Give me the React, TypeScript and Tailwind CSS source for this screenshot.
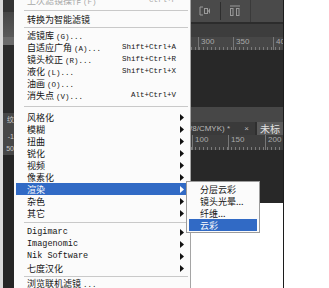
import React from "react";

type Row =
  | { sep: true; h: string }
  | {
      sep?: false;
      label: string;
      suffix?: string;
      shortcut?: string;
      arrow?: boolean;
      latin?: boolean;
      disabled?: boolean;
      active?: boolean;
    };

const rows: Row[] = [
  { label: "上次滤镜操作", suffix: "(F)", shortcut: "Ctrl+F", disabled: true },
  { sep: true, h: "h-[6px]" },
  { label: "转换为智能滤镜" },
  { sep: true, h: "h-[5px]" },
  { label: "滤镜库", suffix: "(G)..." },
  { label: "自适应广角", suffix: "(A)...", shortcut: "Shift+Ctrl+A" },
  { label: "镜头校正", suffix: "(R)...", shortcut: "Shift+Ctrl+R" },
  { label: "液化", suffix: "(L)...", shortcut: "Shift+Ctrl+X" },
  { label: "油画", suffix: "(O)..." },
  { label: "消失点", suffix: "(V)...", shortcut: "Alt+Ctrl+V" },
  { sep: true, h: "h-[9px]" },
  { label: "风格化", arrow: true },
  { label: "模糊", arrow: true },
  { label: "扭曲", arrow: true },
  { label: "锐化", arrow: true },
  { label: "视频", arrow: true },
  { label: "像素化", arrow: true },
  { label: "渲染", arrow: true, active: true },
  { label: "杂色", arrow: true },
  { label: "其它", arrow: true },
  { sep: true, h: "h-[7px]" },
  { label: "Digimarc", arrow: true, latin: true },
  { label: "Imagenomic", arrow: true, latin: true },
  { label: "Nik Software", arrow: true, latin: true },
  { label: "七度汉化", arrow: true },
  { sep: true, h: "h-[4px]" },
  { label: "浏览联机滤镜", suffix: "..." },
];

const sub = ["分层云彩", "镜头光晕...", "纤维...", "云彩"];

function Arrow({ white }: { white?: boolean }) {
  return (
    <svg width="4" height="7" viewBox="0 0 4 7" className="shrink-0">
      <path d="M0 0 L4 3.5 L0 7 Z" fill={white ? "#ffffff" : "#111111"} />
    </svg>
  );
}

function MenuRow({ row }: { row: Exclude<Row, { sep: true }> }) {
  const color = row.disabled ? "text-[#a8a8a8]" : row.active ? "text-white" : "text-[#151515]";
  return (
    <div
      className={`mx-[2px] flex h-3 shrink-0 items-center leading-none ${color} ${
        row.active ? "bg-[#316ac5]" : ""
      } ${row.shortcut ? "pr-[12px]" : "pr-[4px]"} pl-[11px]`}
    >
      <div className="flex flex-1 items-baseline">
        {row.latin ? (
          <span className="font-['Liberation_Mono',monospace] text-[8.5px]">{row.label}</span>
        ) : (
          <span className="font-['Noto_Sans_CJK_SC',sans-serif] text-[9px]">{row.label}</span>
        )}
        {row.suffix && (
          <span className="ml-[2px] font-['Liberation_Mono',monospace] text-[7.5px]">{row.suffix}</span>
        )}
      </div>
      {row.shortcut && (
        <span className="font-['Liberation_Mono',monospace] text-[7.5px]">{row.shortcut}</span>
      )}
      {row.arrow && <Arrow white={row.active} />}
    </div>
  );
}

function Ruler({ labels }: { labels: { t: string; x: string }[] }) {
  return (
    <div className="relative h-full w-full overflow-hidden">
      <div className="flex h-full items-start">
        {labels.map((l) => (
          <div key={l.t} className={`flex h-full shrink-0 items-start border-l border-[#777] pl-[2px] ${l.x}`}>
            <span className="font-['Liberation_Sans',sans-serif] text-[8px] leading-[10px] text-[#a9a9a9]">{l.t}</span>
          </div>
        ))}
      </div>
      <div className="absolute bottom-0 left-0 right-0 h-[3px] bg-[repeating-linear-gradient(90deg,#7a7a7a_0_1px,transparent_1px_4px)]" />
    </div>
  );
}

export default function App() {
  return (
    <div className="relative flex h-[288px] w-[329px] overflow-hidden bg-white">
      {/* left strip of the app behind */}
      <div className="flex w-[14px] shrink-0">
        <div className="w-[3px] bg-[#d9d9d9]" />
        <div className="flex w-[11px] flex-col">
          <div className="h-[12px] bg-[#343434]" />
          <div className="h-[25px] bg-gradient-to-b from-[#454545] to-[#5a5a5a]" />
          <div className="h-[8px] bg-[#6b6b6b]" />
          <div className="h-[68px] bg-[#2b2b2b]" />
          <div className="flex h-[42px] flex-col items-end gap-[4px] bg-[#474747] pt-[2px] font-['Liberation_Sans',sans-serif] text-[7px] leading-[8px] text-[#c8c8c8]">
            <span className="font-['Noto_Sans_CJK_SC',sans-serif]">纹</span>
            <span className="pt-[6px]">-1</span>
            <span>50</span>
          </div>
          <div className="flex-1 bg-[#252525]" />
        </div>
      </div>

      {/* filter menu */}
      <div className="flex w-[177px] shrink-0 flex-col border-r border-[#a5a5a5] bg-[#fbfbfb]">
        <div className="mt-[-5px] flex flex-col">
          {rows.map((r, i) =>
            r.sep ? (
              <div key={i} className={`flex shrink-0 items-center pl-[10px] pr-[2px] ${r.h}`}>
                <div className="h-px w-full bg-[#c9c9c9]" />
              </div>
            ) : (
              <MenuRow key={i} row={r} />
            )
          )}
        </div>
      </div>

      {/* photoshop workspace */}
      <div className="flex w-[93px] shrink-0 flex-col border-r border-[#1c1c1c]">
        <div className="flex h-[203px] flex-col bg-[#282828]">
          <div className="flex h-[22px] items-center bg-[#4a4a4a]">
            <svg width="12" height="12" viewBox="0 0 12 12" className="ml-[8px]">
              <path d="M1 2 H4 M1 2 V10 H4" stroke="#9a9a9a" fill="none" />
              <rect x="5.5" y="3.5" width="3" height="5" stroke="#9a9a9a" fill="none" />
              <path d="M11 3 L9 6 L11 9 Z" fill="#9a9a9a" />
            </svg>
            <div className="ml-[9px] h-[18px] w-px bg-[#2e2e2e]" />
            <svg width="12" height="12" viewBox="0 0 12 12" className="ml-[8px]">
              <path d="M1 1 H11" stroke="#9a9a9a" />
              <rect x="1.5" y="3.5" width="2.5" height="7" stroke="#9a9a9a" fill="none" />
              <rect x="7.5" y="3.5" width="2.5" height="7" stroke="#9a9a9a" fill="none" />
            </svg>
            <div className="ml-[9px] h-[22px] w-px bg-[#3a3a3a]" />
          </div>
          <div className="h-[2px] bg-[#2c2c2c]" />
          <div className="h-[13px] bg-[#3d3d3d]" />
          <div className="h-[13px] bg-[#474747]">
            <Ruler
              labels={[
                { t: "300", x: "ml-[7px] w-[35px]" },
                { t: "350", x: "w-[40px]" },
                { t: "40", x: "w-[20px]" },
              ]}
            />
          </div>
          <div className="h-[57px]" />
          <div className="h-[15px] bg-[#474747]" />
          <div className="flex h-[13px] items-stretch bg-[#2f2f2f]">
            <div className="flex w-[64px] items-center gap-[4px] bg-[#3a3a3a] font-['Liberation_Sans',sans-serif] text-[8px] text-[#b9b9b9]">
              <span className="ml-[-1px]">/8/CMYK) *</span>
              <span className="ml-auto mr-[6px] text-[8px]">×</span>
            </div>
            <div className="ml-[2px] flex flex-1 items-center bg-[#5a5a5a] pl-[3px] font-['Noto_Sans_CJK_SC',sans-serif] text-[10px] leading-none text-[#e2e2e2]">
              未标
            </div>
          </div>
          <div className="h-[15px] bg-[#3e3e3e]">
            <Ruler
              labels={[
                { t: "100", x: "ml-[1px] w-[36px]" },
                { t: "150", x: "w-[37px]" },
                { t: "200", x: "w-[30px]" },
              ]}
            />
          </div>
          <div className="flex-1" />
        </div>
        <div className="flex-1 bg-white" />
      </div>

      <div className="flex-1 bg-white" />

      {/* render submenu */}
      <div className="absolute left-[186px] top-[181px] flex w-[74px] flex-col border border-[#9c9c9c] bg-[#fbfbfb] pt-[1px] pb-[1px]">
        {sub.map((s, i) => (
          <div
            key={s}
            className={`mx-[2px] flex h-3 items-center pl-[11px] font-['Noto_Sans_CJK_SC',sans-serif] text-[9px] leading-none ${
              i === 3 ? "bg-[#316ac5] text-white" : "text-[#151515]"
            }`}
          >
            {s}
          </div>
        ))}
      </div>
    </div>
  );
}
